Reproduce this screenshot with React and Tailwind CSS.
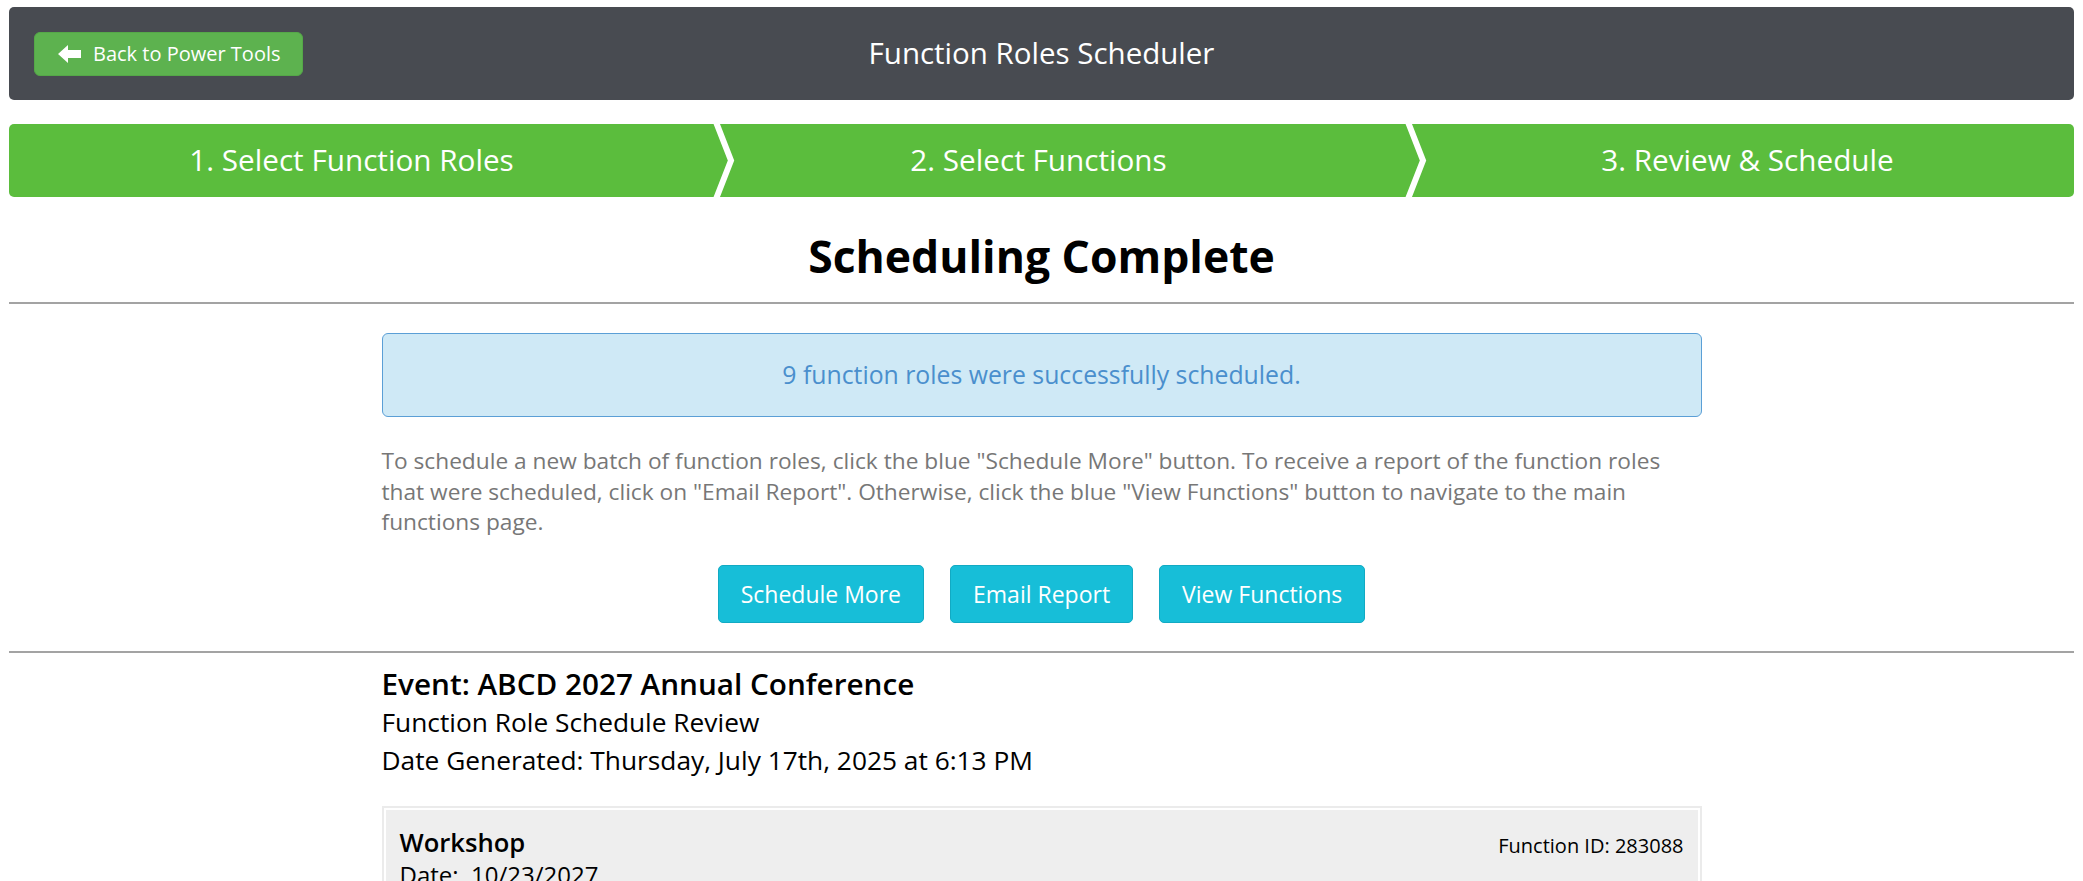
import React from 'react';

const steps = [
    { label: '1. Select Function Roles', pad: 'pl-[16px]' },
    { label: '2. Select Functions', pad: 'pl-[34px]' },
    { label: '3. Review & Schedule', pad: 'pl-[56px]' },
];

const ArrowLeft = () => (
    <svg width="23" height="18" viewBox="0 0 23 18" className="shrink-0">
        <polygon points="0,9 10,0 10,5 23,5 23,13 10,13 10,18" fill="#fff" />
    </svg>
);

const App = () => {
    return (
        <div className="min-h-screen bg-white px-[9px] pt-[7px] pb-[40px] font-['Open_Sans',sans-serif] text-black">
            {/* top bar */}
            <div className="grid h-[93px] grid-cols-[1fr_auto_1fr] items-center rounded-[5px] bg-[#484b51] px-[25px]">
                <div>
                    <button className="flex h-[44px] items-center gap-[12px] rounded-[6px] border border-[#55a848] bg-[#5db24f] pl-[23px] pr-[21px] text-[20px] text-white">
                        <ArrowLeft />
                        Back to Power Tools
                    </button>
                </div>
                <div className="text-[29.5px] text-white">Function Roles Scheduler</div>
                <div />
            </div>

            {/* wizard steps */}
            <div className="relative mt-[24px] flex h-[73px] rounded-[5px] bg-[#5bbd3d] text-[29.7px] text-white">
                {steps.map((s) => (
                    <div key={s.label} className={`flex flex-1 items-center justify-center ${s.pad}`}>
                        {s.label}
                    </div>
                ))}
                <svg className="pointer-events-none absolute inset-0 h-full w-full">
                    <polyline points="707,-2 722,36.5 707,75" fill="none" stroke="#fff" strokeWidth="6" />
                    <polyline points="1399,-2 1414,36.5 1399,75" fill="none" stroke="#fff" strokeWidth="6" />
                </svg>
            </div>

            <h1 className="mt-[29px] text-center text-[44.5px] font-bold leading-[60px]">Scheduling Complete</h1>
            <div className="mt-[16px] h-[2px] bg-[#a3a3a3]" />

            <div className="mx-auto w-[1320px]">
                <div className="mt-[29px] flex h-[84px] items-center justify-center rounded-[6px] border border-[#5b9fd6] bg-[#cfe9f6] text-[24.8px] text-[#4a8fcd]">
                    9 function roles were successfully scheduled.
                </div>
                <p className="mt-[29px] text-[22.7px] leading-[30.5px] text-[#777]">
                    To schedule a new batch of function roles, click the blue "Schedule More" button. To receive a report of the function roles that were scheduled, click on "Email Report". Otherwise, click the blue "View Functions" button to navigate to the main functions page.
                </p>
                <div className="mt-[27.5px] flex justify-center gap-[26px]">
                    {['Schedule More', 'Email Report', 'View Functions'].map((b) => (
                        <button
                            key={b}
                            className="h-[58px] rounded-[5px] border border-[#12aac3] bg-[#17bed8] px-[22px] text-[23px] text-white"
                        >
                            {b}
                        </button>
                    ))}
                </div>
            </div>

            <div className="mt-[28px] h-[2px] bg-[#a3a3a3]" />

            <div className="mx-auto w-[1320px]">
                <div className="mt-[12px]">
                    <div className="text-[29.7px] font-semibold leading-[38px]">Event: ABCD 2027 Annual Conference</div>
                    <div className="text-[26.3px] leading-[38px]">Function Role Schedule Review</div>
                    <div className="text-[26.3px] leading-[38px]">Date Generated: Thursday, July 17th, 2025 at 6:13 PM</div>
                </div>

                <div className="mt-[27px] border-2 border-[#ebebeb] p-[2px]">
                    <div className="bg-[#eeeeee] px-[14px] pb-[16px] pt-[18px]">
                        <div className="flex items-start justify-between">
                            <div className="text-[25.6px] font-semibold leading-[30px]">Workshop</div>
                            <div className="pt-[4px] text-[20px] leading-[28px]">Function ID: 283088</div>
                        </div>
                        <div className="text-[24px] leading-[30px]">Date:&nbsp; 10/23/2027</div>
                        <div className="text-[24px] leading-[32px]">Time:&nbsp; 9:00 AM - 12:00 PM</div>
                        <div className="text-[24px] leading-[32px]">Location:&nbsp; Room 101</div>
                    </div>
                </div>
            </div>
        </div>
    );
};

export default App;
